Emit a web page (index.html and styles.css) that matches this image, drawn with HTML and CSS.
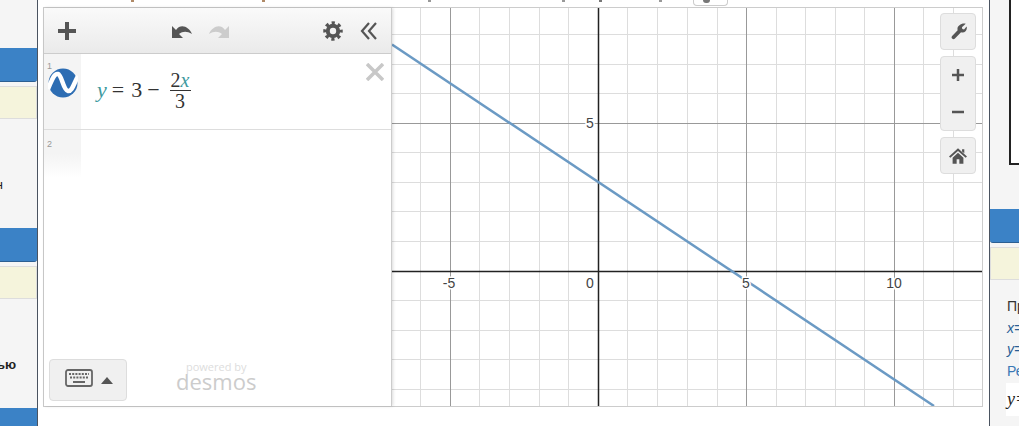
FILE: index.html
```html
<!DOCTYPE html>
<html lang="ru">
<head>
    <meta charset="utf-8">
    <meta name="viewport" content="width=device-width, initial-scale=1">
    <title>Desmos</title>
    <link rel="stylesheet" href="styles.css">
</head>
<body>
<div class="page">
    <aside class="side-left">
        <div class="group">
            <div class="bar"></div>
            <div class="note"></div>
            <p class="cut">н</p>
        </div>
        <div class="group">
            <div class="bar"></div>
            <div class="note"></div>
            <p class="cut cut-bold">ью</p>
        </div>
        <div class="group">
            <div class="bar"></div>
        </div>
    </aside>

    <main class="main">
        <div class="topstrip">
            <span class="tick t1"></span>
            <span class="tick t2"></span>
            <span class="tick t3"></span>
            <span class="tick t4"></span>
            <span class="tick t5"></span>
            <span class="tick t6"></span>
            <span class="keybtn"><span class="keybtn-dot"></span></span>
        </div>

        <div class="calc">
            <section class="list">
                <div class="list-head">
                    <svg class="ic-plus" viewBox="0 0 18 18"><path d="M9 0v18M0 9h18"/></svg>
                    <div class="history">
                        <svg class="ic-undo" viewBox="0 0 22 16"><path d="M1 3v12h11l-4-4c4-3 8-3 13 0C18 4 10 0 5 7z"/></svg>
                        <svg class="ic-undo ic-redo" viewBox="0 0 22 16"><path d="M1 3v12h11l-4-4c4-3 8-3 13 0C18 4 10 0 5 7z"/></svg>
                    </div>
                    <svg class="ic-gear" viewBox="0 0 20 20">
                        <circle class="gear-ring" cx="10" cy="10" r="5.2"/>
                        <circle class="gear-teeth" cx="10" cy="10" r="8"/>
                    </svg>
                    <svg class="ic-hide" viewBox="0 0 18 18"><path d="M9 1L2 9l7 8M16 1L9 9l7 8"/></svg>
                </div>

                <div class="expr">
                    <div class="gutter">
                        <span class="num">1</span>
                        <svg class="logo" viewBox="0 0 30 30">
                            <circle cx="15" cy="15" r="14.5" fill="#2d6db3"/>
                            <path d="M0 21C4 12 6 5 10 6c4 1 5 16 10 17 4 1 6-8 10-15" fill="none" stroke="#fff" stroke-width="4.500"/>
                        </svg>
                    </div>
                    <div class="math">
                        <i class="var">y</i><span class="op">=</span><span>3</span><span class="op">−</span>
                        <span class="frac">
                            <span class="frac-top">2<i class="var">x</i></span>
                            <span>3</span>
                        </span>
                    </div>
                    <svg class="ic-close" viewBox="0 0 18 18"><path d="M1 1l16 16M17 1L1 17"/></svg>
                </div>

                <div class="expr-empty">
                    <div class="gutter gutter-fade"><span class="num">2</span></div>
                </div>

                <div class="list-foot">
                    <div class="kbd">
                        <svg class="ic-kbd" viewBox="0 0 28 18">
                            <rect x="1" y="1" width="26" height="16" rx="2"/>
                            <path class="kbd-keys" d="M4 5h20M5 8.500h18"/>
                            <path class="kbd-space" d="M8 13h12"/>
                        </svg>
                        <span class="kbd-arrow"></span>
                    </div>
                    <div class="brand">
                        <span class="brand-top">powered by</span>
                        <span class="brand-name">desmos</span>
                    </div>
                </div>
            </section>

            <section class="graph">
                <svg class="plot" viewBox="392 8 590 398">
                    <path class="minor" d="M420.500 8V406M479.500 8V406M509.500 8V406M539.500 8V406M568.500 8V406M627.500 8V406M657.500 8V406M687.500 8V406M717.500 8V406M776.500 8V406M805.500 8V406M835.500 8V406M864.500 8V406M923.500 8V406M953.500 8V406"/>
                    <path class="minor" d="M392 34.500H982M392 64.500H982M392 93.500H982M392 152.500H982M392 182.500H982M392 211.500H982M392 241.500H982M392 300.500H982M392 330.500H982M392 359.500H982M392 389.500H982"/>
                    <path class="major" d="M450.500 8V406M746.500 8V406M894.500 8V406M392 123.500H982"/>
                    <path class="axis" d="M598.500 8V406M392 271.500H982"/>
                    <path class="curve" d="M392 44.500L934 406"/>
                    <text x="449" y="288">-5</text>
                    <text x="590" y="288">0</text>
                    <text x="746" y="288">5</text>
                    <text x="894" y="288">10</text>
                    <text x="590" y="128">5</text>
                </svg>

                <div class="controls">
                    <div class="ctl">
                        <svg class="ic-ctl ic-wrench" viewBox="0 0 20 20"><path d="M18.500 1L14 5l.5 2 2 .5 3-3.500c1.500 4.500-2.500 8.500-6.500 7L5.500 18.500a2.200 2.200 0 0 1-3-3.200L9 8.500C7.500 4 13.500-.5 18.500 1z"/></svg>
                    </div>
                    <div class="ctl-pair">
                        <div class="ctl-half"><svg class="ic-zoom" viewBox="0 0 14 14"><path d="M7 1v12M1 7h12"/></svg></div>
                        <div class="ctl-half"><svg class="ic-zoom" viewBox="0 0 14 14"><path d="M1 7h12"/></svg></div>
                    </div>
                    <div class="ctl">
                        <svg class="ic-ctl" viewBox="0 0 20 18"><path d="M10 .5L20 9.500 18.500 11 10 3.500 1.500 11 0 9.500zM14.500 1.500h2.500v4.500l-2.500-2zM4 11l6-5.500 6 5.500v6.500h-4.500v-5h-3v5H4z"/></svg>
                    </div>
                </div>
            </section>
        </div>
    </main>

    <aside class="side-right">
        <div class="figure"></div>
        <div class="bar bar-right"></div>
        <div class="note note-right"></div>
        <div class="solution">
            <p>Пример</p>
            <p class="coord">x=0</p>
            <p class="coord">y=3</p>
            <p class="link">Решение</p>
            <div class="answer">y=3</div>
        </div>
    </aside>
</div>
</body>
</html>
```

FILE: styles.css
```css
html, body {
    margin: 0;
    height: 100%;
    background: #fff;
}
p {
    margin: 0;
}
.page {
    display: flex;
    height: 426px;
    overflow: hidden;
    font-family: "Liberation Sans", Arial, sans-serif;
}

/* side columns */
.side-left {
    flex: 0 0 37px;
    padding-top: 48px;
    background: #f5f5f5;
    border-right: 1px solid #4a5360;
    overflow: hidden;
}
.group {
    height: 180px;
}
.bar {
    height: 33px;
    background: #3b82c6;
    border-bottom: 1px solid #2c5f92;
    border-bottom-right-radius: 3px;
}
.note {
    height: 33px;
    margin-top: 4px;
    background: #f5f4dc;
    border: 1px solid #ddd;
    border-left: none;
    box-sizing: border-box;
}
.cut {
    width: 43px;
    margin: 58px 0 0 -40px;
    font-size: 13px;
    line-height: 15px;
    text-align: right;
    color: #222;
    white-space: nowrap;
}
.cut-bold {
    width: 56px;
    font-weight: bold;
}
.side-right {
    flex: 0 0 29px;
    background: #f5f5f5;
    border-left: 1px solid #4a5360;
    overflow: hidden;
}
.figure {
    height: 163px;
    margin-left: 19px;
    background: #fff;
    border-left: 2px solid #222;
    border-bottom: 2px solid #222;
}
.bar-right {
    margin-top: 44px;
    border-bottom-right-radius: 0;
    border-bottom-left-radius: 3px;
}
.note-right {
    border-left: 1px solid #ddd;
    border-right: none;
}
.solution {
    padding: 16px 0 0 17px;
    font-size: 14px;
    line-height: 21.500px;
    color: #333;
    white-space: nowrap;
}
.coord {
    font-style: italic;
    color: #2a5f96;
}
.link {
    color: #3a78b5;
}
.answer {
    height: 33px;
    margin: 1px 0 0 -1px;
    padding-left: 1px;
    background: #fff;
    font: italic 18px/33px "Liberation Serif", serif;
    color: #222;
}

/* cut off line of text above the calculator */
.main {
    flex: 1;
    min-width: 0;
    padding-left: 5px;
}
.topstrip {
    display: flex;
    height: 7px;
    padding-left: 88px;
}
.tick {
    width: 3px;
    height: 2px;
    background: #b08a68;
}
.t2 { margin-left: 128px; }
.t3 { margin-left: 163px; background: #999; }
.t4 { margin-left: 131px; background: #999; }
.t5 { margin-left: 34px; background: #777; }
.t6 { margin-left: 57px; background: #999; }
.keybtn {
    display: flex;
    justify-content: center;
    box-sizing: border-box;
    width: 35px;
    height: 6px;
    margin-left: 31px;
    border: 1px solid #ccc;
    border-top: none;
    border-radius: 0 0 4px 4px;
}
.keybtn-dot {
    width: 7px;
    height: 3px;
    margin-right: 8px;
    background: #777;
    border-radius: 0 0 4px 4px;
}

/* calculator */
.calc {
    display: flex;
    box-sizing: border-box;
    width: 940px;
    height: 400px;
    background: #fff;
    border: 1px solid #ccc;
}
.list {
    position: relative;
    z-index: 1;
    display: flex;
    flex-direction: column;
    flex: 0 0 347px;
    min-width: 0;
    background: #fff;
    border-right: 1px solid #ccc;
    box-shadow: 1px 0 3px rgba(0, 0, 0, 0.15);
}
.list-head {
    display: flex;
    align-items: center;
    box-sizing: border-box;
    height: 46px;
    padding-left: 14px;
    background: linear-gradient(#fafafa, #eaeaea);
    border-bottom: 1px solid #ccc;
}
.ic-plus {
    width: 18px;
    height: 18px;
    fill: none;
    stroke: #555;
    stroke-width: 4;
}
.history {
    display: flex;
    gap: 15px;
    margin-left: 95px;
}
.ic-undo {
    width: 22px;
    height: 16px;
    fill: #555;
}
.ic-redo {
    fill: #ccc;
    transform: scaleX(-1);
}
.ic-gear {
    width: 20px;
    height: 20px;
    margin-left: 93px;
    fill: none;
    stroke: #555;
}
.gear-ring {
    stroke-width: 4;
}
.gear-teeth {
    stroke-width: 3.500;
    stroke-dasharray: 3.140 3.140;
    stroke-dashoffset: 1.570;
}
.ic-hide {
    width: 18px;
    height: 18px;
    margin-left: 17px;
    fill: none;
    stroke: #555;
    stroke-width: 2.200;
}
.expr {
    position: relative;
    display: flex;
    height: 75px;
    border-bottom: 1px solid #ddd;
}
.gutter {
    position: relative;
    flex: 0 0 37px;
    background: #f4f4f4;
}
.num {
    position: absolute;
    top: 7px;
    left: 3px;
    font-size: 9px;
    line-height: 11px;
    color: #999;
}
.logo {
    position: absolute;
    top: 14px;
    left: 4px;
    width: 30px;
    height: 30px;
}
.math {
    display: flex;
    align-items: center;
    padding: 0 0 3px 16px;
    font: 22px/1 "Liberation Serif", serif;
    color: #333;
}
.var {
    color: #3e9aa0;
}
.op {
    margin: 0 7px 0 5px;
}
.frac {
    display: flex;
    flex-direction: column;
    align-items: center;
    margin-left: 3px;
    font-size: 20px;
}
.frac-top {
    padding: 0 1px;
    border-bottom: 1px solid #333;
}
.ic-close {
    position: absolute;
    top: 9px;
    right: 7px;
    width: 18px;
    height: 18px;
    fill: none;
    stroke: #c8c8c8;
    stroke-width: 3.500;
}
.expr-empty {
    height: 48px;
    display: flex;
}
.gutter-fade {
    background: linear-gradient(#f4f4f4 50%, #fff);
}
.gutter-fade .num {
    top: 9px;
}
.list-foot {
    display: flex;
    align-items: flex-end;
    margin-top: auto;
    padding: 0 0 5px 5px;
}
.kbd {
    display: flex;
    align-items: center;
    box-sizing: border-box;
    width: 78px;
    height: 42px;
    padding-left: 15px;
    background: #f0f0f0;
    border: 1px solid #ddd;
    border-radius: 4px;
}
.ic-kbd {
    width: 28px;
    height: 18px;
    margin-bottom: 5px;
    fill: none;
    stroke: #666;
}
.ic-kbd rect {
    stroke-width: 1.800;
}
.kbd-keys {
    stroke-width: 2;
    stroke-dasharray: 2 1.200;
}
.kbd-space {
    stroke-width: 2;
}
.kbd-arrow {
    width: 0;
    height: 0;
    margin-left: 8px;
    border-left: 6px solid transparent;
    border-right: 6px solid transparent;
    border-bottom: 7px solid #555;
}
.brand {
    display: flex;
    flex-direction: column;
    align-items: center;
    margin: 0 0 11px 49px;
    font-family: "Open Sans", sans-serif;
}
.brand-top {
    font-size: 11px;
    line-height: 10px;
    color: #ddd;
}
.brand-name {
    font-size: 22px;
    line-height: 18px;
    color: #ccc;
}

/* graph paper */
.graph {
    position: relative;
    flex: 1;
    min-width: 0;
}
.plot {
    display: block;
    width: 590px;
    height: 398px;
    font-family: "Liberation Sans", Arial, sans-serif;
    font-size: 14px;
    fill: #444;
    text-anchor: middle;
}
.plot path {
    fill: none;
}
.minor {
    stroke: #ddd;
}
.major {
    stroke: #999;
}
.axis {
    stroke: #222;
    stroke-width: 1.500;
}
.curve {
    stroke: #6b9ac4;
    stroke-width: 2.500;
}
.plot text {
    paint-order: stroke;
    stroke: #fff;
    stroke-width: 3px;
}
.controls {
    position: absolute;
    top: 5px;
    left: 548px;
    display: flex;
    flex-direction: column;
    gap: 6px;
    width: 36px;
}
.ctl,
.ctl-pair {
    box-sizing: border-box;
    background: #f0f0f0;
    border: 1px solid #ddd;
    border-radius: 4px;
}
.ctl {
    display: flex;
    align-items: center;
    justify-content: center;
    height: 37px;
}
.ctl-half {
    display: flex;
    align-items: center;
    justify-content: center;
    height: 36.500px;
}
.ic-ctl {
    width: 18px;
    height: 18px;
    fill: #555;
}
.ic-wrench {
    width: 17px;
    height: 17px;
}
.ic-zoom {
    width: 14px;
    height: 14px;
    fill: none;
    stroke: #555;
    stroke-width: 2.500;
}
```
